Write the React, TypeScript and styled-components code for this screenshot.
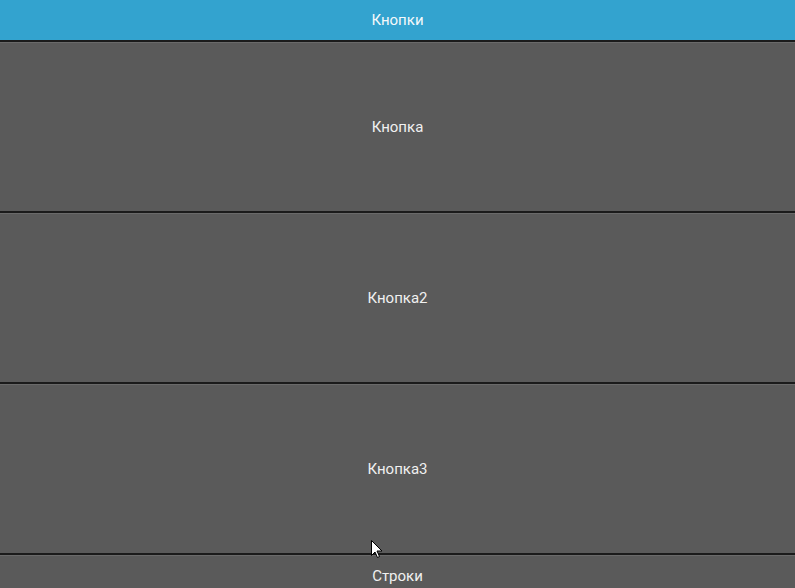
import styled, { createGlobalStyle } from 'styled-components';

const GlobalStyle = createGlobalStyle`
  html, body {
    margin: 0;
    padding: 0;
    height: 100%;
    background: #5a5a5a;
    overflow: hidden;
  }
  #root {
    height: 100%;
  }
`;

const Screen = styled.div`
  position: relative;
  display: flex;
  flex-direction: column;
  height: 588px;
  width: 100%;
  overflow: hidden;
  font-family: Roboto, 'Noto Sans', sans-serif;
  font-size: 15px;
  color: #f0f0f0;
  background: #5a5a5a;
`;

const TitleBar = styled.header`
  display: flex;
  align-items: center;
  justify-content: center;
  height: 40px;
  flex-shrink: 0;
  background: #33a3cf;
  color: #f4f8fa;
`;

const PanelButton = styled.button<{ $height: number }>`
  display: flex;
  align-items: center;
  justify-content: center;
  width: 100%;
  height: ${(p) => p.$height}px;
  flex: 0 0 auto;
  margin: 0;
  padding: 0;
  border: none;
  border-top: 2px solid #1b1b1b;
  box-shadow: inset 0 1px 0 #6a6a6a;
  background: #5a5a5a;
  color: #f0f0f0;
  font: inherit;
  cursor: pointer;
`;

const Cursor = styled.svg`
  position: absolute;
  left: 370px;
  top: 539px;
  pointer-events: none;
`;

export default function App() {
  return (
    <>
      <GlobalStyle />
      <Screen>
        <TitleBar>Кнопки</TitleBar>
        <PanelButton $height={171}>Кнопка</PanelButton>
        <PanelButton $height={171}>Кнопка2</PanelButton>
        <PanelButton $height={171}>Кнопка3</PanelButton>
        <PanelButton $height={44}>Строки</PanelButton>
        <Cursor width="13" height="21" viewBox="0 0 13 21">
          <path
            d="M1.5 1.5 L1.5 16.5 L5 13 L7.5 18.5 L9.5 17.5 L7 12 L12 12 Z"
            fill="#ffffff"
            stroke="#000000"
            strokeWidth="1"
          />
        </Cursor>
      </Screen>
    </>
  );
}
